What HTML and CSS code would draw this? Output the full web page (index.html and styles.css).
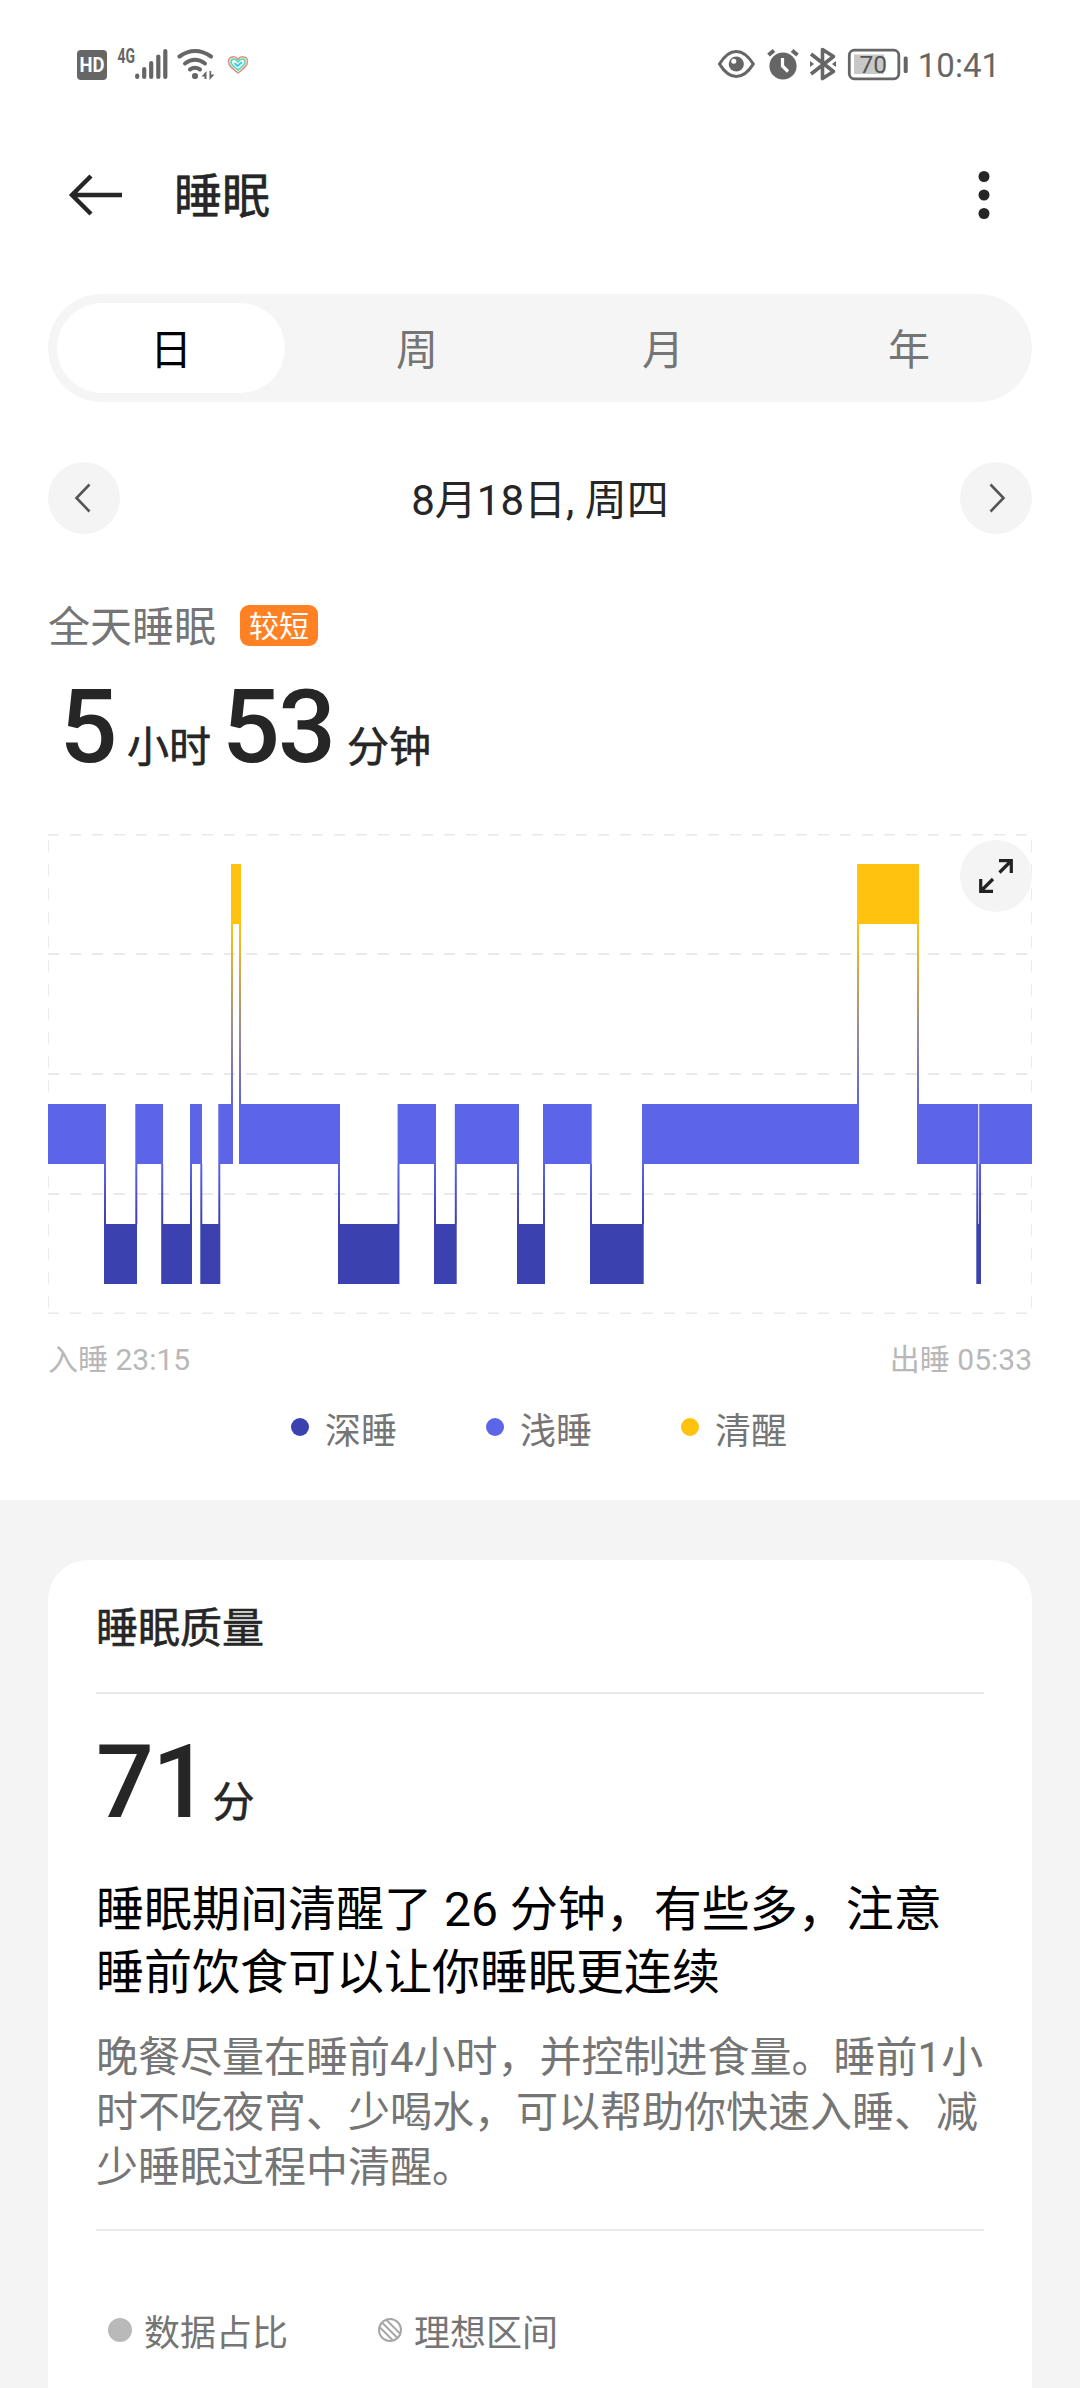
FILE: index.html
```html
<!DOCTYPE html>
<html lang="zh-CN">
<head>
<meta charset="utf-8">
<title>睡眠</title>
<link rel="stylesheet" href="styles.css">
</head>
<body>
<div class="status">
  <div class="status-left">
    <svg width="148" height="40" viewBox="70 44 148 40">
      <rect x="77" y="50" width="30" height="30" rx="4" fill="#666"/>
      <text class="hd" x="92" y="71.5" text-anchor="middle" textLength="25" lengthAdjust="spacingAndGlyphs">HD</text>
      <text class="net" x="117.5" y="62.5" textLength="17.5" lengthAdjust="spacingAndGlyphs">4G</text>
      <g stroke="#666" stroke-width="4.2" stroke-linecap="round">
        <path d="M137.2 75.5V77M144.2 69V77M151.2 63V77M158.3 56.5V77M165.3 51V77"/>
      </g>
      <g stroke="#666" stroke-width="4" stroke-linecap="round" fill="none">
        <path d="M179.5 56.5Q195 45.5 211 56.5"/>
        <path d="M185 63.5Q195 56 205 63.5"/>
        <path d="M190 69.5Q195 66 200 69.5"/>
      </g>
      <circle cx="195" cy="76" r="3.1" fill="#666"/>
      <path d="M201.5 76.5L206.5 71V79H204.5V76.5ZM214.5 74.5L209.5 80V71H211.2V74.5Z" fill="#666"/>
    </svg>
    <svg class="heart" width="22" height="20" viewBox="0 0 22 20" fill="none" stroke-linejoin="round">
      <path d="M11 18C5 13.500 1.500 10.500 1.500 6.500C1.500 1 8.500 .5 11 4.500C13.500 .5 20.500 1 20.500 6.500C20.500 10.500 17 13.500 11 18Z" stroke="#d99088" stroke-width="1.500" fill="#f3fffb"/>
      <path d="M11 15C7 12 4 9.500 4 7C4 3.500 8.500 3 11 7C13.500 3 18 3.500 18 7C18 9.500 15 12 11 15Z" stroke="#62d6b4" stroke-width="1.700"/>
      <path d="M7.500 8L10.500 11L15 7" stroke="#43c8dc" stroke-width="1.800"/>
    </svg>
  </div>
  <div class="status-right">
    <svg width="192" height="40" viewBox="718 44 192 40">
      <path d="M720.500 64Q728 51.500 737.300 51.500T754.300 64Q746.500 76.500 737.300 76.500T720.500 64Z" fill="none" stroke="#666" stroke-width="3.200" stroke-linejoin="round"/>
      <circle cx="737.300" cy="64" r="7.600" fill="#666"/>
      <circle cx="734.800" cy="61.300" r="2.500" fill="#fff"/>
      <circle cx="784" cy="66" r="13.600" fill="#666"/>
      <path d="M783.500 58V66L789 71.500" fill="none" stroke="#fff" stroke-width="3.200"/>
      <path d="M769.500 55L775 50.500M793 50.500L798.500 55" stroke="#666" stroke-width="4"/>
      <path d="M812 54L834.500 71.500L823.500 78.500V49.500L834.500 56.500L812 74" fill="none" stroke="#666" stroke-width="3.600" stroke-linejoin="round"/>
      <path d="M811 61L815 64L811 67ZM837 61L833 64L837 67Z" fill="#666"/>
      <rect x="850.300" y="50.200" width="49.500" height="28.600" rx="5" fill="none" stroke="#666" stroke-width="2.800"/>
      <rect x="855" y="54.500" width="30" height="19.500" fill="#c8c8c8"/>
      <text class="battery" x="860.500" y="72.500">70</text>
      <rect x="904.700" y="56.500" width="4" height="16.500" rx="1.500" fill="#666"/>
    </svg>
    <span class="clock">10:41</span>
  </div>
</div>

<header class="header">
  <svg class="back" width="56" height="44" viewBox="0 0 56 44" fill="none" stroke="#262626" stroke-width="4.400"><path d="M54 22H4.500M23 3L4 22L23 41"/></svg>
  <h1>睡眠</h1>
  <svg class="more" width="12" height="50" viewBox="0 0 12 50" fill="#262626"><circle cx="6" cy="6.500" r="5.500"/><circle cx="6" cy="25" r="5.500"/><circle cx="6" cy="43.500" r="5.500"/></svg>
</header>

<nav class="tabs">
  <span class="tab active">日</span><span class="tab">周</span><span class="tab">月</span><span class="tab">年</span>
</nav>

<div class="datebar">
  <span class="round"><svg width="72" height="72" fill="none" stroke="#555" stroke-width="2.600"><path d="M41.500 22.500L28.500 36L41.500 49.500"/></svg></span>
  <span class="date">8月18日, 周四</span>
  <span class="round"><svg width="72" height="72" fill="none" stroke="#555" stroke-width="2.600"><path d="M30.500 22.500L43.500 36L30.500 49.500"/></svg></span>
</div>

<section class="overview">
  <div class="caption"><span>全天睡眠</span><b class="badge">较短</b></div>
  <div class="total"><span class="num">5</span><span class="unit hour">小时</span><span class="num">53</span><span class="unit minute">分钟</span></div>

  <div class="chart">
    <svg width="984" height="480" viewBox="48 834 984 480">
      <defs>
        <linearGradient id="wake" gradientUnits="userSpaceOnUse" x1="0" y1="924" x2="0" y2="1104"><stop offset="0" stop-color="#ffc20e"/><stop offset="1" stop-color="#5c64e8"/></linearGradient>
        <linearGradient id="deep" gradientUnits="userSpaceOnUse" x1="0" y1="1164" x2="0" y2="1224"><stop offset="0" stop-color="#5c64e8"/><stop offset="1" stop-color="#3b41ae"/></linearGradient>
      </defs>
      <g stroke="#e9e9e9" stroke-width="2" stroke-dasharray="11 11">
        <path d="M48 834.500H1032M48 954H1032M48 1074H1032M48 1194H1032M48 1313.500H1032"/>
      </g>
      <path d="M48.500 840V1314M1031.500 840V1314" stroke="#ebebeb" stroke-width="1" stroke-dasharray="12 12"/>
      <path fill="url(#wake)" d="M231 924h2v180h-2zM239 924h2v180h-2zM857 924h2v180h-2zM917 924h2v180h-2z"/>
      <path fill="url(#deep)" d="M104 1164h2v60h-2zM135.300 1164h2v60h-2zM161.200 1164h2v60h-2zM190 1164h2v60h-2zM200.300 1164h2v60h-2zM218.300 1164h2v60h-2zM338 1164h2v60h-2zM397.500 1164h2v60h-2zM434 1164h2v60h-2zM454.800 1164h2v60h-2zM517 1164h2v60h-2zM543 1164h2v60h-2zM590 1164h2v60h-2zM642 1164h2v60h-2zM976.300 1164h2v60h-2zM979 1164h2v60h-2z"/>
      <path fill="#5c64e8" d="M48 1104H106V1164H48zM135.300 1104H163V1164H135.300zM190 1104H202V1164H190zM218.300 1104H233V1164H218.300zM239 1104H340V1164H239zM397.600 1104H436V1164H397.600zM454.800 1104H519V1164H454.800zM543 1104H591.700V1164H543zM642 1104H859V1164H642zM917 1104H978.200V1164H917zM979.200 1104H1032V1164H979.200z"/>
      <path fill="#3b41ae" d="M104 1224H137V1284H104zM161.200 1224H192V1284H161.200zM200.300 1224H220.300V1284H200.300zM338 1224H399.400V1284H338zM434 1224H456.700V1284H434zM517 1224H545V1284H517zM590 1224H643.700V1284H590zM976.300 1224H981V1284H976.300z"/>
      <path fill="#ffc20e" d="M231 864H241V924H231zM857 864H919V924H857z"/>
    </svg>
    <span class="round expand"><svg width="72" height="72" fill="none" stroke="#222" stroke-width="3.200"><path d="M39.500 32.500L51 21M39 20.700H51.300V33M33 39L21 51M20.700 39V51.300H33"/></svg></span>
  </div>
  <div class="range"><span>入睡 23:15</span><span>出睡 05:33</span></div>
  <div class="legend">
    <span class="key"><i class="dot deep"></i>深睡</span>
    <span class="key"><i class="dot light"></i>浅睡</span>
    <span class="key"><i class="dot awake"></i>清醒</span>
  </div>
</section>

<main class="details">
  <section class="card">
    <h2>睡眠质量</h2>
    <hr>
    <div class="score"><span class="num">71</span><span class="unit">分</span></div>
    <p class="summary">睡眠期间清醒了 26 分钟，有些多，注意<br>睡前饮食可以让你睡眠更连续</p>
    <p class="advice">晚餐尽量在睡前4小时，并控制进食量。睡前1小<br>时不吃夜宵、少喝水，可以帮助你快速入睡、减<br>少睡眠过程中清醒。</p>
    <hr>
    <div class="marks">
      <span class="mark"><svg width="24" height="24"><circle cx="12" cy="12" r="12" fill="#b9b9b9"/></svg>数据占比</span>
      <span class="mark"><svg width="24" height="24" fill="none" stroke="#a6a6a6" stroke-width="2"><circle cx="12" cy="12" r="11"/><path d="M2 9.500L14.500 22M4 4.500L19.500 20M8.500 2L22 15.500"/></svg>理想区间</span>
    </div>
  </section>
</main>
</body>
</html>
```
FILE: styles.css
```css
* { box-sizing: border-box; }
body {
  margin: 0;
  width: 1080px;
  height: 2388px;
  overflow: hidden;
  background: #fff;
  color: #262626;
  font-family: Roboto, "Noto Sans CJK SC", sans-serif;
  white-space: nowrap;
}
svg { display: block; flex: none; }
h1, h2, p { margin: 0; font-weight: 400; }
/* half-step weight between regular and medium */
h1, h2, .unit { -webkit-text-stroke: 0.6px currentColor; }

.status {
  display: flex;
  justify-content: space-between;
  height: 128px;
  padding: 44px 80px 0 70px;
}
.status-left, .status-right { display: flex; height: 40px; }
.heart { margin: 11px 0 0 9px; }
.hd { font: 700 20px Roboto, sans-serif; fill: #fff; }
.net { font: 700 20px Roboto, sans-serif; fill: #666; }
.battery { font: 400 24.500px Roboto, sans-serif; fill: #555; }
.clock { margin-left: 9px; font-size: 33px; line-height: 43px; color: #666; }

.header {
  display: flex;
  align-items: center;
  height: 134px;
  padding: 0 90px 0 68px;
}
.header h1 { margin-left: 50px; font-size: 48px; line-height: 60px; padding-top: 4px; }
.more { margin-left: auto; }

.tabs {
  display: grid;
  grid-template-columns: repeat(4, 1fr);
  height: 108px;
  margin: 32px 48px 0;
  border-radius: 54px;
  background: #f5f5f5;
}
.tab {
  margin: 9px;
  border-radius: 45px;
  font-size: 42px;
  line-height: 96px;
  height: 90px;
  text-align: center;
  color: #757575;
}
.tab.active { background: #fff; color: #000; }

.datebar {
  display: flex;
  justify-content: space-between;
  height: 72px;
  margin: 60px 48px 0;
}
.round { width: 72px; height: 72px; border-radius: 50%; background: #f4f4f4; }
.date { font-size: 42px; line-height: 77px; }

.overview { height: 966px; padding: 66px 48px 0; }
.caption {
  display: flex;
  align-items: center;
  height: 56px;
  font-size: 42px;
  line-height: 58px;
  color: #757575;
}
.badge {
  height: 41px;
  margin: -5px 0 0 24px;
  padding: 0 9px;
  border-radius: 9px;
  background: #ff8124;
  color: #fff;
  font-size: 30px;
  font-weight: 400;
  line-height: 44px;
}
.total {
  display: flex;
  height: 100px;
  margin-top: 21px;
  padding-left: 11.5px;
  align-items: baseline;
}
.num { font-size: 102px; font-weight: 500; line-height: 100px; letter-spacing: -2px; }
.unit { font-size: 42px; line-height: 60px; }
.hour { margin: 0 11px 0 11.5px; }
.minute { margin-left: 13px; }

.chart { position: relative; height: 480px; margin-top: 57px; }
.expand { position: absolute; top: 6px; right: 0; }
.range {
  display: flex;
  justify-content: space-between;
  margin-top: 26px;
  font-size: 30px;
  line-height: 40px;
  color: #b8b8b8;
}
.legend {
  display: flex;
  gap: 89px;
  margin-top: 27px;
  padding-left: 243px;
  font-size: 36px;
  line-height: 50px;
  color: #757575;
}
.key { display: flex; }
.dot { width: 18px; height: 18px; margin: 11px 16px 0 0; border-radius: 50%; }
.deep { background: #3b41ae; }
.light { background: #5c64e8; }
.awake { background: #ffc20e; }

.details { height: 888px; padding: 60px 48px 0; background: #f4f4f4; }
.card {
  height: 828px;
  padding: 39px 48px 0;
  border-radius: 40px 40px 0 0;
  background: #fff;
}
.card h2 { font-size: 42px; line-height: 60px; }
.card hr { height: 2px; margin: 33px 0 0; border: 0; background: #e9e9e9; }
.score { display: flex; align-items: baseline; height: 100px; margin-top: 38px; }
.score .unit { margin-left: 4.5px; }
.summary { margin-top: 46px; font-size: 48px; line-height: 63px; color: #000; }
.advice { margin-top: 26px; font-size: 42px; line-height: 55px; color: #757575; }
.advice + hr { margin-top: 34px; }
.marks {
  display: flex;
  gap: 90px;
  margin-top: 79px;
  padding-left: 12px;
  font-size: 36px;
  line-height: 48px;
  color: #757575;
}
.mark { display: flex; }
.mark svg { margin: 8px 12px 0 0; }
```
